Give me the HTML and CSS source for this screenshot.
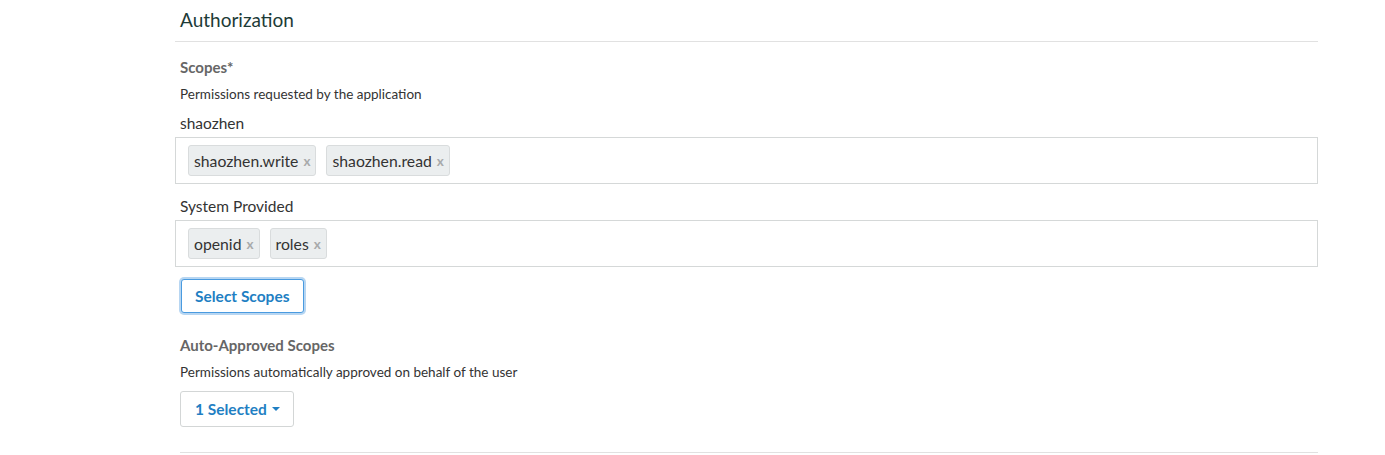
FILE: index.html
```html
<!DOCTYPE html>
<html>
<head>
<meta charset="utf-8">
<link rel="stylesheet" href="styles.css">
</head>
<body>
<main class="page">
  <section class="section">
    <h2 class="section-title">Authorization</h2>
    <div class="field">
      <div class="field-label">Scopes*</div>
      <div class="field-help">Permissions requested by the application</div>
      <div class="group-label">shaozhen</div>
      <div class="tag-box">
        <span class="tag">shaozhen.write <span class="tag-x">x</span></span>
        <span class="tag">shaozhen.read <span class="tag-x">x</span></span>
      </div>
      <div class="group-label">System Provided</div>
      <div class="tag-box">
        <span class="tag">openid <span class="tag-x">x</span></span>
        <span class="tag">roles <span class="tag-x">x</span></span>
      </div>
      <button class="btn btn-focus">Select Scopes</button>
    </div>
    <div class="field">
      <div class="field-label">Auto-Approved Scopes</div>
      <div class="field-help">Permissions automatically approved on behalf of the user</div>
      <button class="btn btn-dropdown">1 Selected <span class="caret"></span></button>
    </div>
    <hr class="rule">
  </section>
</main>
</body>
</html>
```
FILE: styles.css
```css
* { box-sizing: border-box; }
html, body { margin: 0; padding: 0; background: #fff; }
body {
  font-family: "Lato", "Liberation Sans", sans-serif;
  color: #333;
}
.page {
  padding-left: 175px;
  width: 1318px;
}
.section-title {
  margin: 0;
  padding: 9px 0 10px 5px;
  font-size: 19px;
  font-weight: 400;
  line-height: 22px;
  color: #1d3b37;
  border-bottom: 1px solid #e1e1e1;
}
.field-label {
  margin-top: 16px;
  padding-left: 5px;
  font-size: 15px;
  font-weight: 700;
  color: #666;
  line-height: 18px;
}
.field-help {
  margin-top: 10px;
  padding-left: 5px;
  font-size: 13.5px;
  line-height: 16px;
  color: #333;
}
.group-label {
  margin-top: 11px;
  padding-left: 5px;
  font-size: 15.5px;
  line-height: 20px;
  color: #333;
}
.tag-box + .group-label { margin-top: 12px; }
.tag-box {
  margin-top: 4px;
  height: 47px;
  border: 1px solid #d5d8d8;
  padding: 7px 12px;
  display: flex;
  gap: 10px;
  align-items: flex-start;
}
.tag {
  display: inline-flex;
  align-items: center;
  height: 31px;
  padding: 0 5px;
  background: #ebeeef;
  border: 1px solid #d9dcdd;
  border-radius: 3px;
  font-size: 15.75px;
  color: #333;
}
.tag-x {
  margin-left: 5px;
  color: #a8aaab;
  font-size: 13.5px;
  font-weight: 700;
}
.btn {
  display: flex;
  align-items: center;
  margin-left: 6px;
  height: 34px;
  padding: 0 13px;
  background: #fff;
  border-radius: 3px;
  font-family: inherit;
  font-size: 15.5px;
  font-weight: 700;
  color: #1f7fc3;
  cursor: pointer;
}
.btn-focus {
  margin-top: 12px;
  border: 1px solid #4a9be0;
  box-shadow: 0 0 0 2px #b7d6f2;
}
.field + .field .field-label { margin-top: 23px; }
.btn-dropdown {
  margin-top: 11px;
  margin-left: 5px;
  height: 36px;
  border: 1px solid #d3d6d6;
  padding: 0 13px 0 14px;
}
.caret {
  display: inline-block;
  width: 0;
  height: 0;
  margin-left: 5px;
  border-top: 4px solid #1f7fc3;
  border-left: 4px solid transparent;
  border-right: 4px solid transparent;
}
.rule {
  margin: 25px 0 0 5px;
  border: 0;
  border-top: 1px solid #e1e1e1;
}
```
